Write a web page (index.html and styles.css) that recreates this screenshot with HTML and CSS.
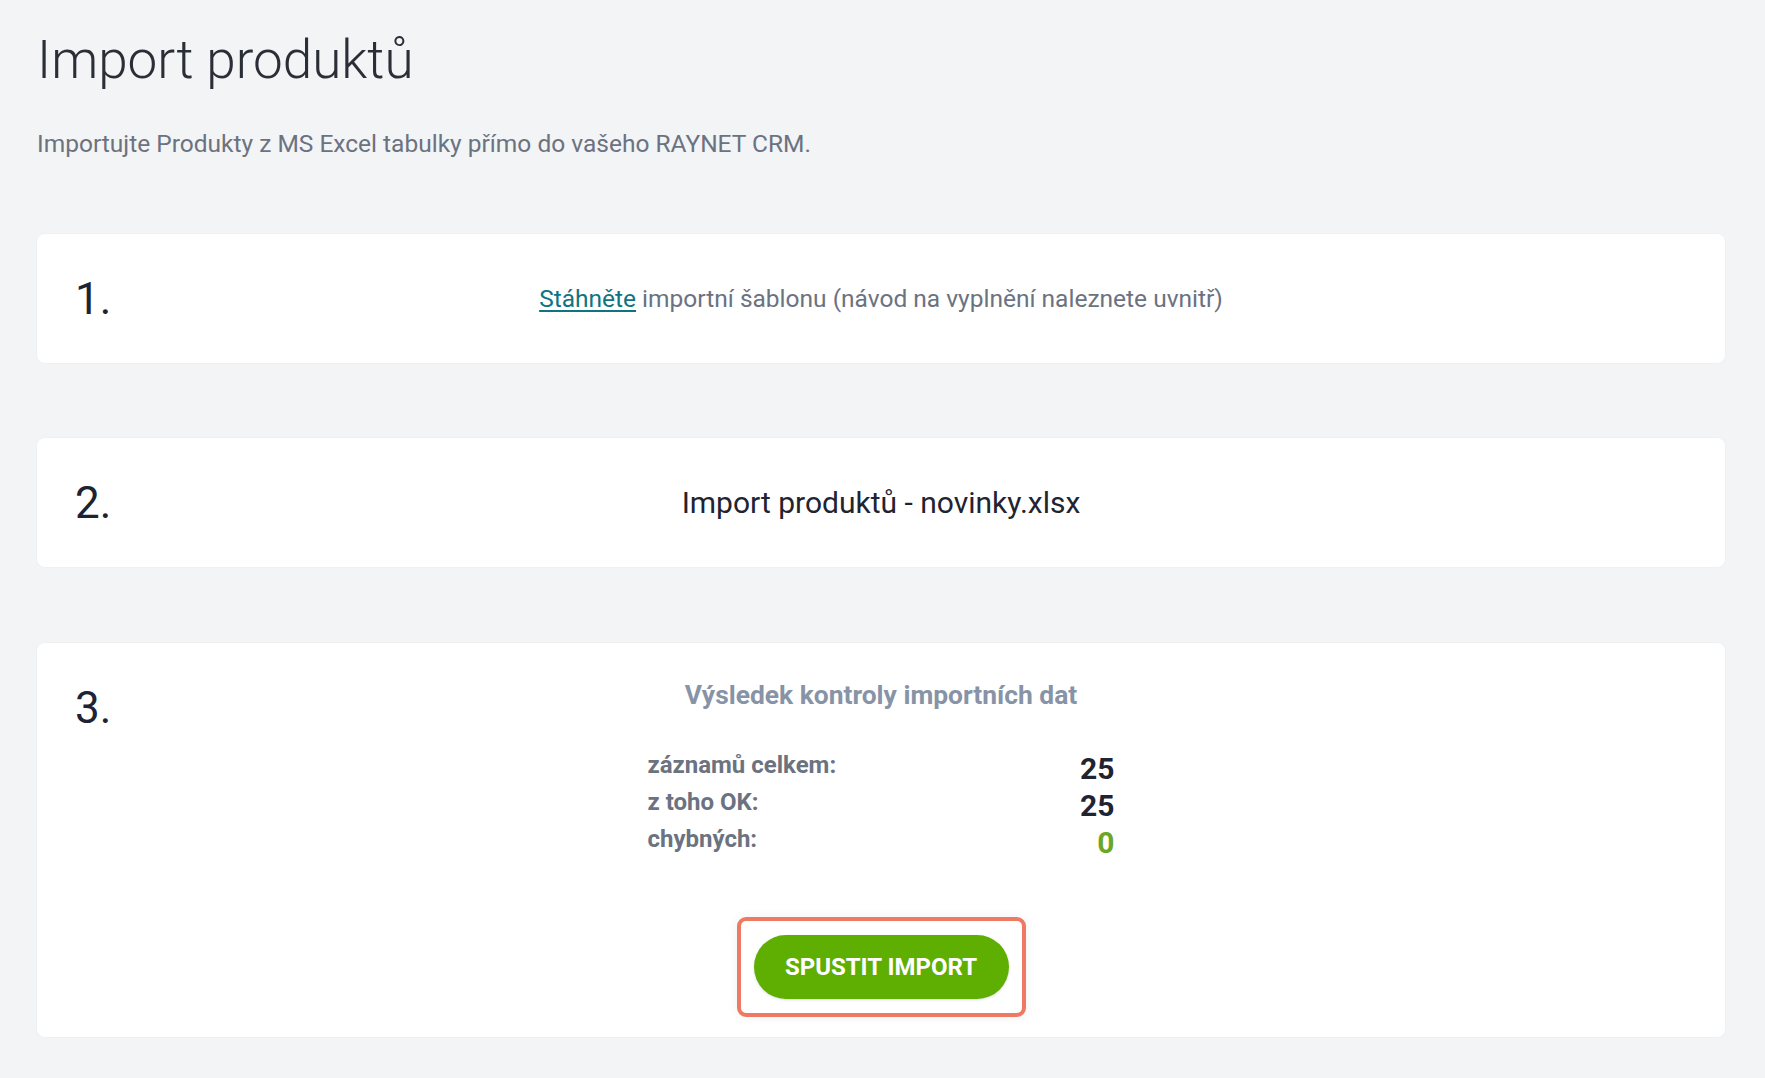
FILE: index.html
```html
<!DOCTYPE html>
<html lang="cs">
<head>
<meta charset="utf-8">
<title>Import produktů</title>
<link rel="stylesheet" href="styles.css">
</head>
<body>
<main class="page">
  <h1 class="title">Import produktů</h1>
  <p class="subtitle">Importujte Produkty z MS Excel tabulky přímo do vašeho RAYNET CRM.</p>

  <section class="card card-center">
    <div class="step">1.</div>
    <div class="content">
      <p class="text-muted"><a href="#" class="link">Stáhněte</a> importní šablonu (návod na vyplnění naleznete uvnitř)</p>
    </div>
  </section>

  <section class="card card-center">
    <div class="step">2.</div>
    <div class="content">
      <p class="file-name">Import produktů - novinky.xlsx</p>
    </div>
  </section>

  <section class="card card-top">
    <div class="step">3.</div>
    <div class="content">
      <h2 class="result-title">Výsledek kontroly importních dat</h2>
      <dl class="stats">
        <dt>záznamů celkem:</dt><dd>25</dd>
        <dt>z toho OK:</dt><dd>25</dd>
        <dt>chybných:</dt><dd class="ok">0</dd>
      </dl>
      <div class="highlight">
        <button class="btn-import" type="button">SPUSTIT IMPORT</button>
      </div>
    </div>
  </section>
</main>
</body>
</html>
```

FILE: styles.css
```css
html, body {
  margin: 0;
  padding: 0;
  background: #f3f4f6;
}

body {
  font-family: Roboto, "Liberation Sans", sans-serif;
  color: #1f2430;
}

.page {
  padding: 28px 40px 40px 37px;
}

.title {
  margin: 0;
  font-weight: 300;
  font-size: 53px;
  line-height: 64px;
  color: #2a2e37;
}

.subtitle {
  margin: 38px 0 0;
  font-size: 24.5px;
  line-height: 28px;
  color: #6b7280;
}

.card {
  display: grid;
  grid-template-columns: 1fr auto 1fr;
  background: #ffffff;
  border-radius: 8px;
  box-shadow: 0 0 0 1px #eef0f2;
  padding: 40px 38px 39px;
  margin-top: 75px;
}

.page .subtitle + .card {
  margin-top: 76px;
}

.card-center {
  align-items: center;
}

.card-top {
  align-items: start;
  margin-top: 76px;
  padding-top: 40px;
  padding-bottom: 20px;
}

.step {
  font-size: 44px;
  line-height: 50px;
  color: #1c2333;
}

.content {
  display: flex;
  flex-direction: column;
  align-items: center;
}

.content p {
  margin: 0;
}

.text-muted {
  font-size: 24.5px;
  line-height: 30px;
  color: #6b7280;
}

.link {
  color: #0f7480;
  text-decoration: underline;
  text-underline-offset: 3px;
}

.file-name {
  font-size: 30px;
  line-height: 34px;
  color: #1f2430;
}

.result-title {
  margin: 0;
  font-size: 26.4px;
  line-height: 24px;
  font-weight: 700;
  color: #8793a6;
}

.stats {
  display: grid;
  grid-template-columns: auto auto;
  justify-content: space-between;
  align-items: end;
  width: 467px;
  margin: 40px 0 0;
  row-gap: 0;
}

.stats dt {
  font-size: 24px;
  line-height: 37px;
  font-weight: 700;
  color: #6b7280;
  align-self: start;
}

.stats dd {
  margin: 0;
  font-size: 30px;
  line-height: 37px;
  font-weight: 700;
  color: #1f2430;
  text-align: right;
  position: relative;
  top: 3px;
}

.stats dd.ok {
  color: #6aa727;
}

.highlight {
  margin-top: 59px;
  padding: 14px 13px;
  border: 4px solid #ef7a64;
  border-radius: 9px;
  box-shadow: 0 0 12px rgba(0, 0, 0, 0.06);
}

.btn-import {
  display: block;
  width: 255px;
  height: 64px;
  border: 0;
  border-radius: 32px;
  background: #5fae02;
  color: #ffffff;
  font-family: Roboto, "Liberation Sans", sans-serif;
  font-size: 24px;
  font-weight: 700;
  letter-spacing: 0;
  box-shadow: 0 1px 3px rgba(0, 0, 0, 0.12);
}
```
